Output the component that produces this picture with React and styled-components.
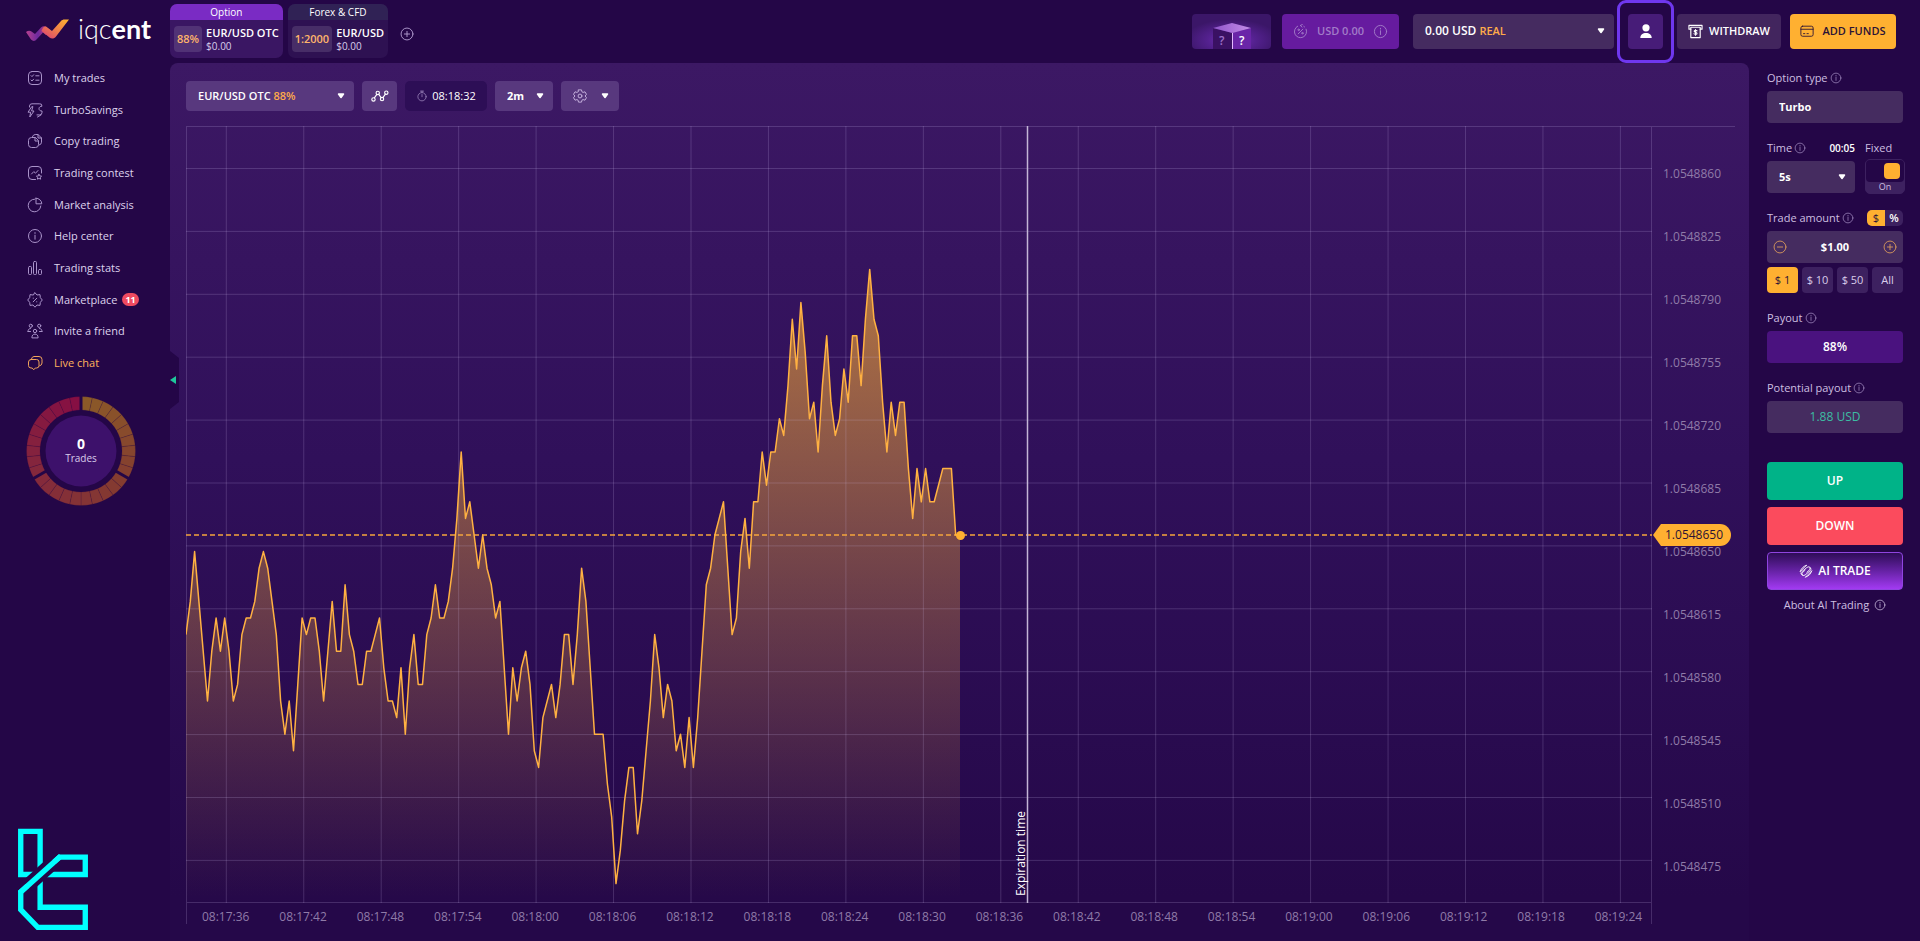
import { useState } from "react";
import styled, { createGlobalStyle, css } from "styled-components";

const GlobalStyle = createGlobalStyle`
  * {
    box-sizing: border-box;
  }

  body {
    margin: 0;
    background: #240647;
    color: #fff;
    font-family: "Open Sans", "Noto Sans", sans-serif;
    font-size: 12px;
    line-height: 16px;
  }

  button, input, select, output {
    font: inherit;
    color: inherit;
  }

  button {
    border: 0;
    padding: 0;
    background: none;
    cursor: pointer;
  }

  svg {
    display: block;
    flex-shrink: 0;
  }
`;

/* ---------- data ---------- */

// price levels of the quote, one entry per tick, counted from the current price
const ticks = [
  -6, -4, -1, -4, -7, -10, -7, -5, -7, -5, -7, -10, -9, -6, -5, -5, -4, -2, -1, -2,
  -4, -6, -10, -12, -10, -13, -9, -5, -6, -5, -5, -7, -10, -7, -4, -7, -7, -3, -6, -7,
  -9, -9, -7, -7, -6, -5, -8, -10, -10, -11, -8, -12, -8, -6, -9, -9, -6, -5, -3, -5,
  -5, -4, -2, 1, 5, 1, 2, 0, -2, 0, -2, -3, -5, -4, -8, -12, -8, -10, -8, -7,
  -9, -13, -14, -11, -10, -9, -11, -9, -6, -6, -9, -6, -2, -4, -8, -12, -12, -12, -15, -17,
  -21, -19, -16, -14, -14, -18, -16, -13, -10, -6, -8, -11, -9, -10, -13, -12, -14, -11, -14, -11,
  -7, -3, -2, 0, 1, 2, -2, -6, -5, -1, 1, -2, 2, 2, 5, 3, 5, 5, 7, 6,
  9, 13, 10, 14, 11, 7, 8, 5, 9, 12, 8, 6, 7, 10, 8, 12, 12, 9, 13, 16,
  13, 12, 8, 5, 8, 6, 8, 8, 4, 1, 4, 2, 4, 2, 2, 3, 4, 4, 4, 0,
];

const prices = [
  "1.0548860", "1.0548825", "1.0548790", "1.0548755", "1.0548720", "1.0548685",
  "1.0548650", "1.0548615", "1.0548580", "1.0548545", "1.0548510", "1.0548475",
];

const times = [
  "08:17:36", "08:17:42", "08:17:48", "08:17:54", "08:18:00", "08:18:06", "08:18:12",
  "08:18:18", "08:18:24", "08:18:30", "08:18:36", "08:18:42", "08:18:48", "08:18:54",
  "08:19:00", "08:19:06", "08:19:12", "08:19:18", "08:19:24",
];

const menu = [
  { label: "My trades", icon: "trades" },
  { label: "TurboSavings", icon: "savings" },
  { label: "Copy trading", icon: "copy" },
  { label: "Trading contest", icon: "contest" },
  { label: "Market analysis", icon: "pie" },
  { label: "Help center", icon: "info" },
  { label: "Trading stats", icon: "stats" },
  { label: "Marketplace", icon: "market", badge: 11 },
  { label: "Invite a friend", icon: "friends" },
  { label: "Live chat", icon: "chat", active: true },
];

/* ---------- icons ---------- */

const paths = {
  trades: (
    <>
      <rect x="1.5" y="1.5" width="13" height="13" rx="3.5" />
      <path d="M4 5.6l1 1 1.6-1.8M4 10l1 1 1.6-1.8M8.8 5.8h3.2M8.8 10.2h3.2" />
    </>
  ),
  savings: (
    <>
      <path d="M2.500 5V4A2.400 2.400 0 0 1 5 1.800h7.200A2.400 2.400 0 0 1 15 4.200c-1.500 0-3 .8-3 2.500 0 1.500 1.200 2.300 3 2.300v1.500a2.400 2.400 0 0 1-2.400 2.400H10" />
      <path d="M4.500 5L1 10.200h2.600L2.800 15l4.200-6H4.600L5.800 5zM10.500 15l3.500-2" />
    </>
  ),
  copy: (
    <>
      <path d="M5.500 3.600A3 3 0 0 1 8.200 1.500H11l3.500 3.500v4.200a3 3 0 0 1-2.400 2.900M11 1.500V5h3.500" />
      <path d="M8 4.500H4.500a3 3 0 0 0-3 3v4a3 3 0 0 0 3 3h4a3 3 0 0 0 3-3V8zM8 4.500V8h3.500" />
    </>
  ),
  contest: (
    <>
      <path d="M8.500 14.500H5A3.500 3.500 0 0 1 1.500 11V5A3.500 3.500 0 0 1 5 1.500h6A3.500 3.500 0 0 1 14.500 5v3" />
      <path d="M4.500 9l2.300-2.400 1.700 1.600 2.500-2.700" />
      <path d="M12 9.300l.8 1.600 1.800.3-1.300 1.200.3 1.800-1.600-.8-1.600.8.3-1.800-1.300-1.200 1.800-.3z" />
    </>
  ),
  pie: (
    <>
      <path d="M7.500 2.200A6.300 6.300 0 1 0 13.800 9" />
      <path d="M9 1.200v5.600h5.800A5.800 5.800 0 0 0 9 1.200z" />
    </>
  ),
  info: (
    <>
      <circle cx="8" cy="8" r="6.500" />
      <path d="M8 7.200v4M8 4.600v.8" />
    </>
  ),
  stats: (
    <>
      <rect x="1.500" y="6.500" width="3" height="8" rx="1" />
      <rect x="6.500" y="1.500" width="3" height="13" rx="1" />
      <rect x="11.500" y="9.500" width="3" height="5" rx="1" />
    </>
  ),
  market: (
    <>
      <path d="M8 .8l2 2.200 3-.4.300 3 2 2.400-2 2.400-.3 3-3-.4-2 2.200-2-2.200-3 .4-.3-3L.7 8l2-2.400.3-3 3 .4z" />
      <path d="M9.800 6.200l-3.600 3.600M6.200 6.200h.2M9.600 9.800h.2" />
    </>
  ),
  friends: (
    <>
      <circle cx="3.800" cy="2.800" r="1.600" />
      <circle cx="12.200" cy="2.800" r="1.600" />
      <circle cx="8" cy="8" r="1.700" />
      <path d="M1 8.500c0-2 1-3 2.500-3M15 8.500c0-2-1-3-2.500-3M4.900 14.500c0-2.300 1.200-3.400 3.100-3.400s3.100 1.100 3.100 3.400zM1 8.500h2.500M15 8.500h-2.500" />
    </>
  ),
  chat: (
    <>
      <path d="M4.500 3.800A2.800 2.800 0 0 1 7 1.500h5A3 3 0 0 1 15 4.500v3.500a3 3 0 0 1-2.400 2.900" />
      <path d="M4 4.500h5.500A2.500 2.500 0 0 1 12 7v3.500A2.500 2.500 0 0 1 9.500 13H8.300l-1.600 1.800L5.200 13H4a2.500 2.500 0 0 1-2.500-2.500V7A2.500 2.500 0 0 1 4 4.500z" />
    </>
  ),
  plus: (
    <>
      <circle cx="8" cy="8" r="6.800" />
      <path d="M8 5v6M5 8h6" />
    </>
  ),
  minus: (
    <>
      <circle cx="8" cy="8" r="6.800" />
      <path d="M5 8h6" />
    </>
  ),
  discount: (
    <>
      <path d="M5 2.300A6.500 6.500 0 1 0 14 5.500M8 1.500l2-1M8 1.500l1.500 1.800M11.500 2.500l.8.600" />
      <path d="M10.500 5.500l-5 5" />
      <circle cx="6" cy="6.200" r=".8" />
      <circle cx="10" cy="9.800" r=".8" />
    </>
  ),
  line: (
    <>
      <circle cx="2.200" cy="11" r="1.500" />
      <circle cx="6" cy="5.300" r="1.500" />
      <circle cx="9.800" cy="10.700" r="1.500" />
      <circle cx="13.600" cy="5" r="1.500" />
      <path d="M3 9.700l2.200-3.100M6.900 6.500l2.100 3M10.600 9.400l2.200-3.100" />
    </>
  ),
  clock: (
    <>
      <circle cx="8" cy="9" r="5.500" />
      <path d="M8 6v3M6 1.500h4M8 1.500v2" />
    </>
  ),
  gear: (
    <>
      <path d="M6.300 1h3.400l.5 2.200 1.300.7 2.200-.7 1.700 2.900L13.800 8l1.600 1.900-1.700 2.900-2.200-.7-1.300.7-.5 2.200H6.300l-.5-2.200-1.300-.7-2.200.7L.6 9.900 2.200 8 .6 6.100l1.700-2.900 2.200.7 1.300-.7z" />
      <circle cx="8" cy="8" r="2.200" />
    </>
  ),
  withdraw: (
    <>
      <path d="M3 5.500H1V1.500h14v4h-2" />
      <path d="M3 3.500h10V14.500H3zM9.600 7.300c-.5-.7-3-.8-3 .5s3 .8 3 2.200-2.600 1.200-3.200.4M8 6v6" />
    </>
  ),
  card: (
    <>
      <rect x="1" y="2.500" width="14" height="11.500" rx="2" />
      <path d="M1 6h14M4 11h1.500M8 11h1.500" />
    </>
  ),
  ai: (
    <>
      <path d="M1.500 8.500C2.500 5 5 2.500 8.500 1.500M1.500 8.500l7-7" />
      <path d="M4 12C1.500 12 2 9.800 3.500 8.500L9 4c3-2 5 .3 3.500 2.200L9 9.500" />
      <path d="M12 4.500c2.500 0 2 2.200.5 3.500L7 12.500c-3 2-5-.3-3.500-2.200L7 7" />
      <path d="M14.500 8c-1 3.500-3.500 6-7 7M14.500 8l-7 7" />
    </>
  ),
};

const Icon = ({ name, size = 16, width = 1 }) => (
  <svg width={size} height={size} viewBox="0 0 16 16" fill="none" stroke="currentColor"
    strokeWidth={width} strokeLinecap="round" strokeLinejoin="round" aria-hidden="true">
    {paths[name]}
  </svg>
);

const Caret = () => (
  <svg width="8" height="6" viewBox="0 0 8 6" aria-hidden="true">
    <path d="M1.500 1h5L4 4.500z" fill="#fff" stroke="#fff" strokeWidth="1.500" strokeLinejoin="round" />
  </svg>
);

const Logo = () => (
  <LogoLink href="#" aria-label="iqcent">
    <svg width="44" height="24" viewBox="0 0 44 24">
      <defs>
        <linearGradient id="mark-left" x1="0" x2="1">
          <stop offset="0" stopColor="#b9408f" />
          <stop offset=".5" stopColor="#6d2aa0" />
          <stop offset="1" stopColor="#e0436e" />
        </linearGradient>
        <linearGradient id="mark-right" x1="0" x2="1" y1="1" y2="0">
          <stop offset="0" stopColor="#d83a78" />
          <stop offset=".5" stopColor="#f07f4a" />
          <stop offset="1" stopColor="#ffb52e" />
        </linearGradient>
      </defs>
      <path d="M1 13c2-1.500 4-1.500 5.500-.5L10 15l6-6.500c1.500-1.500 3.500-1.700 5-.7L25 11l-4 5-3-2.500-6 6.500c-2 2.500-4 2.500-6 .5z" fill="url(#mark-left)" />
      <path d="M21 7.500l6 4.500L36 2c1-1 2-1.500 3.500-1.500H44L31 17.500c-2 2.500-4.500 2.500-6.500 1L16.500 12c1-3 2.500-5 4.500-4.500z" fill="url(#mark-right)" />
    </svg>
    <LogoText>iqc<b>ent</b></LogoText>
  </LogoLink>
);

const Watermark = () => (
  <svg width="71" height="103" viewBox="56 56 212 308" fill="none" stroke="#00ffff" strokeWidth="16" aria-hidden="true">
    <path d="M110 195H64V66H122V180" />
    <path d="M140 195H257V143H180L64 247V300L115 353H257V293H122V205" />
    <path d="M164 157L84 229" stroke="#240647" strokeWidth="42" />
    <path d="M184 140L60 251" />
  </svg>
);

const Cube = () => (
  <svg width="79" height="35" viewBox="0 0 79 35" aria-hidden="true">
    <defs>
      <radialGradient id="glow" cx=".5" cy=".75" r=".6">
        <stop offset="0" stopColor="#7a33bd" />
        <stop offset=".5" stopColor="#54218f" />
        <stop offset="1" stopColor="#3b1668" />
      </radialGradient>
      <linearGradient id="cube-top" x1="0" x2="1">
        <stop offset="0" stopColor="#8f55c9" />
        <stop offset="1" stopColor="#c48de8" />
      </linearGradient>
    </defs>
    <rect width="79" height="35" fill="url(#glow)" />
    <path d="M21 14l19.500 5v16H21z" fill="#3a1163" />
    <path d="M40.500 19L59 14v21H40.500z" fill="#6a25a8" />
    <path d="M21 14L40 9l19 5-18.500 5z" fill="url(#cube-top)" />
    <path d="M40.500 19v16" stroke="#e3b9ff" />
    <text x="27" y="31" fontSize="12" fill="#9d70c9">?</text>
    <text x="47" y="31" fontSize="12" fontWeight="600" fill="#fff">?</text>
  </svg>
);

/* ---------- trades ring ---------- */

const mix = (from, to, t) => {
  const part = from.map((c, i) => Math.round(c + (to[i] - c) * t));
  return `rgb(${part.join(",")})`;
};

const ringStops = [[139, 90, 40], [132, 60, 48], [132, 40, 60], [134, 12, 68]];

const Ring = () => {
  const point = (deg, r) => {
    const a = ((deg - 90) * Math.PI) / 180;
    return `${55 + r * Math.cos(a)} ${55 + r * Math.sin(a)}`;
  };

  return (
    <svg width="110" height="110" viewBox="0 0 110 110" aria-hidden="true">
      {Array.from({ length: 30 }, (_, i) => {
        const part = Math.floor(i / 10);
        const from = i * 12;
        const to = from + 12;
        return (
          <path key={i}
            d={`M${point(from, 54.5)}A54.500 54.500 0 0 1 ${point(to, 54.5)}L${point(to, 41)}A41 41 0 0 0 ${point(from, 41)}z`}
            fill={mix(ringStops[part], ringStops[part + 1], (i % 10) / 10)}
            stroke="#240647" strokeOpacity=".25" strokeWidth=".7" />
        );
      })}
      {[0, 120, 240].map((deg) => (
        <path key={deg} d={`M${point(deg, 40)}L${point(deg, 56)}`} stroke="#240647" strokeWidth="3" />
      ))}
      <circle cx="55" cy="55" r="35.500" fill="#3d116b" />
    </svg>
  );
};

/* ---------- chart ---------- */

const PLOT = { width: 1466, height: 777, price: 409, level: 16.6, tick: 4.3, end: 774 };

const Chart = () => {
  const line = [
    ...ticks.map((level, i) => [i * PLOT.tick, PLOT.price - level * PLOT.level]),
    [PLOT.end, PLOT.price],
  ];
  const points = line.map(([x, y]) => `${x.toFixed(1)},${y.toFixed(1)}`).join(" ");
  const top = `${(PLOT.price / PLOT.height) * 100}%`;

  return (
    <ChartGrid>
      <Plot>
        <svg viewBox={`0 0 ${PLOT.width} ${PLOT.height}`} preserveAspectRatio="none">
          <defs>
            <linearGradient id="area" x1="0" x2="0" y1="0" y2="1">
              <stop offset="0" stopColor="#ffb031" stopOpacity=".62" />
              <stop offset="1" stopColor="#ffb031" stopOpacity="0" />
            </linearGradient>
          </defs>
          <polygon points={`0,${PLOT.height} ${points} ${PLOT.end},${PLOT.height}`} fill="url(#area)" />
          <g stroke="#e0ccff" strokeOpacity=".18">
            {times.map((time, i) => (
              <line key={time} x1={40.3 + i * 77.45} x2={40.3 + i * 77.45} y1="0" y2={PLOT.height} />
            ))}
            {prices.map((price, i) => (
              <line key={price} x1="0" x2={PLOT.width} y1={42.5 + i * 62.9} y2={42.5 + i * 62.9} />
            ))}
          </g>
          <line x1="0" x2={PLOT.width} y1={PLOT.price} y2={PLOT.price} stroke="#f5a53c" strokeWidth="1.500" strokeDasharray="5 3" />
          <polyline points={points} fill="none" stroke="#ffb142" strokeWidth="1.500" strokeLinejoin="round" />
          <line x1="841.500" x2="841.500" y1="0" y2={PLOT.height} stroke="#c4b5d6" strokeWidth="1.500" />
        </svg>
        <Dot style={{ top, left: `${(PLOT.end / PLOT.width) * 100}%` }} />
        <Expiration style={{ right: `${100 - (843 / PLOT.width) * 100}%` }}>Expiration time</Expiration>
      </Plot>
      <PriceAxis>
        {prices.map((price) => <span key={price}>{price}</span>)}
        <PriceTag style={{ top }}>1.0548650</PriceTag>
      </PriceAxis>
      <TimeAxis>
        {times.map((time) => <span key={time}>{time}</span>)}
      </TimeAxis>
    </ChartGrid>
  );
};

/* ---------- page parts ---------- */

const Header = () => (
  <HeaderBar>
    <Logo />
    <Tab $active>
      <TabTitle $active>Option</TabTitle>
      <TabBody>
        <Rate>88%</Rate>
        <div>
          <TabPair>EUR/USD OTC</TabPair>
          <TabSum>$0.00</TabSum>
        </div>
      </TabBody>
    </Tab>
    <Tab>
      <TabTitle>Forex &amp; CFD</TabTitle>
      <TabBody>
        <Rate>1:2000</Rate>
        <div>
          <TabPair>EUR/USD</TabPair>
          <TabSum>$0.00</TabSum>
        </div>
      </TabBody>
    </Tab>
    <AddTab aria-label="Add asset"><Icon name="plus" size={14} /></AddTab>

    <Actions>
      <Promo aria-label="Mystery box"><Cube /></Promo>
      <Bonus>
        <Icon name="discount" size={15} />
        USD 0.00
        <Icon name="info" size={15} />
      </Bonus>
      <Balance aria-haspopup="listbox">
        <span>0.00 USD <Accent>REAL</Accent></span>
        <Caret />
      </Balance>
      <Profile aria-label="Profile">
        <svg width="12" height="15" viewBox="0 0 12 15" fill="#fff">
          <circle cx="6" cy="3.800" r="3.600" />
          <path d="M.3 14C.3 10.800 2.800 9 6 9s5.700 1.800 5.700 5z" />
        </svg>
      </Profile>
      <Withdraw><Icon name="withdraw" size={15} width={1.2} />WITHDRAW</Withdraw>
      <AddFunds><Icon name="card" size={14} />ADD FUNDS</AddFunds>
    </Actions>
  </HeaderBar>
);

const Sidebar = () => (
  <Side>
    <Menu>
      {menu.map(({ label, icon, badge, active }) => (
        <MenuLink key={label} href="#" $active={active}>
          <Icon name={icon} />
          {label}
          {badge && <Badge>{badge}</Badge>}
        </MenuLink>
      ))}
    </Menu>
    <Trades>
      <Ring />
      <TradesText>
        <strong>0</strong>
        <span>Trades</span>
      </TradesText>
    </Trades>
    <Mark><Watermark /></Mark>
  </Side>
);

const Workspace = () => (
  <Panel>
    <Collapse aria-label="Collapse menu">
      <svg width="6" height="8" viewBox="0 0 6 8"><path d="M6 0v8L0 4z" fill="#1fc79b" /></svg>
    </Collapse>
    <Toolbar>
      <PairButton aria-haspopup="listbox">
        <span>EUR/USD OTC <Accent>88%</Accent></span>
        <Caret />
      </PairButton>
      <ToolButton aria-label="Chart type"><Icon name="line" size={18} /></ToolButton>
      <Clock><Icon name="clock" size={12} /><time>08:18:32</time></Clock>
      <SelectBox $tool>
        <select aria-label="Time frame" defaultValue="2m">
          <option>2m</option>
          <option>5m</option>
        </select>
        <Caret />
      </SelectBox>
      <SettingsButton aria-label="Chart settings" aria-haspopup="menu">
        <Icon name="gear" size={14} />
        <Caret />
      </SettingsButton>
    </Toolbar>
    <Chart />
  </Panel>
);

const Order = () => {
  const [amount, setAmount] = useState(1);
  const [unit, setUnit] = useState("$");
  const [fixed, setFixed] = useState(true);

  return (
    <OrderForm onSubmit={(e) => e.preventDefault()}>
      <Group>
        <Caption><label htmlFor="type">Option type</label><Icon name="info" size={12} /></Caption>
        <SelectBox>
          <select id="type" defaultValue="Turbo"><option>Turbo</option></select>
        </SelectBox>
      </Group>

      <TimeRow>
        <Group>
          <Caption>
            <label htmlFor="time">Time</label><Icon name="info" size={12} />
            <Left>00:05</Left>
          </Caption>
          <SelectBox>
            <select id="time" defaultValue="5s"><option>5s</option></select>
            <Caret />
          </SelectBox>
        </Group>
        <Group>
          <Caption><label htmlFor="fixed">Fixed</label></Caption>
          <Switch>
            <input id="fixed" type="checkbox" checked={fixed} onChange={() => setFixed(!fixed)} />
            <i />
            <span>{fixed ? "On" : "Off"}</span>
          </Switch>
        </Group>
      </TimeRow>

      <Group>
        <Caption>
          <label htmlFor="amount">Trade amount</label><Icon name="info" size={12} />
          <Units>
            {["$", "%"].map((u) => (
              <label key={u}>
                <input type="radio" name="unit" checked={unit === u} onChange={() => setUnit(u)} />
                <span>{u}</span>
              </label>
            ))}
          </Units>
        </Caption>
        <Stepper>
          <button type="button" aria-label="Less" onClick={() => setAmount(Math.max(1, amount - 1))}>
            <Icon name="minus" size={14} />
          </button>
          <input id="amount" value={`$${amount.toFixed(2)}`} readOnly />
          <button type="button" aria-label="More" onClick={() => setAmount(amount + 1)}>
            <Icon name="plus" size={14} />
          </button>
        </Stepper>
        <Quick>
          {[1, 10, 50].map((sum) => (
            <QuickButton key={sum} type="button" $active={amount === sum} onClick={() => setAmount(sum)}>
              $ {sum}
            </QuickButton>
          ))}
          <QuickButton type="button">All</QuickButton>
        </Quick>
      </Group>

      <Group>
        <Caption><label htmlFor="payout">Payout</label><Icon name="info" size={12} /></Caption>
        <Result id="payout" $strong>88%</Result>
      </Group>
      <Group>
        <Caption><label htmlFor="potential">Potential payout</label><Icon name="info" size={12} /></Caption>
        <Result id="potential">{(amount * 1.88).toFixed(2)} USD</Result>
      </Group>

      <Deals>
        <DealButton $kind="up">UP</DealButton>
        <DealButton $kind="down">DOWN</DealButton>
        <DealButton $kind="ai"><Icon name="ai" size={14} />AI TRADE</DealButton>
        <About href="#">About AI Trading <Icon name="info" size={12} /></About>
      </Deals>
    </OrderForm>
  );
};

const App = () => (
  <>
    <GlobalStyle />
    <Page>
      <Header />
      <Sidebar />
      <Workspace />
      <Order />
    </Page>
  </>
);

/* ---------- styles ---------- */

const Page = styled.div`
  display: grid;
  grid-template-columns: 170px minmax(0, 1fr) 171px;
  grid-template-rows: 63px 1fr;
  min-height: 100vh;
`;

const HeaderBar = styled.header`
  grid-column: 1 / -1;
  display: flex;
  align-items: flex-start;
  padding-right: 24px;
`;

const LogoLink = styled.a`
  display: flex;
  gap: 9px;
  width: 170px;
  padding: 19px 0 0 25px;
  color: #fff;
  text-decoration: none;
`;

const LogoText = styled.span`
  font: 300 27px/20px Lato, sans-serif;

  b {
    font-weight: 700;
  }
`;

const Tab = styled.section`
  flex-shrink: 0;
  margin: 4px 5px 0 0;
  border-radius: 7px;
  overflow: hidden;
  background: ${({ $active }) => ($active ? "#3a1663" : "#2e1152")};
`;

const TabTitle = styled.h2`
  margin: 0;
  font-size: 10px;
  font-weight: 500;
  line-height: 16px;
  text-align: center;
  background: ${({ $active }) => ($active ? "#7a2bc4" : "#302255")};
`;

const TabBody = styled.div`
  display: flex;
  align-items: center;
  gap: 4px;
  height: 38px;
  padding: 0 4px;
`;

const Rate = styled.span`
  padding: 5px 3px;
  border-radius: 4px;
  background: rgba(255, 255, 255, 0.12);
  color: #ffb56b;
  font-size: 11px;
  font-weight: 600;
`;

const TabPair = styled.div`
  font-size: 11px;
  font-weight: 600;
  line-height: 14px;
`;

const TabSum = styled.div`
  font-size: 10px;
  line-height: 12px;
  color: #d9cdea;
`;

const AddTab = styled.button`
  margin: 27px 0 0 7px;
  color: #b8a3d6;
`;

const Actions = styled.div`
  display: flex;
  gap: 14px;
  margin: 14px 0 0 auto;
`;

const HeaderButton = styled.button`
  display: flex;
  align-items: center;
  justify-content: center;
  height: 35px;
  padding-bottom: 1px;
  border-radius: 4px;
  font-size: 12px;
  font-weight: 600;
`;

const Promo = styled(HeaderButton)`
  overflow: hidden;
  margin-right: -3px;
  padding: 0;
`;

const Bonus = styled(HeaderButton)`
  gap: 9px;
  width: 117px;
  background: #661b9f;
  color: #a27cc8;
  font-size: 11px;
`;

const Balance = styled(HeaderButton)`
  justify-content: space-between;
  width: 201px;
  padding: 0 9px 1px 12px;
  background: #452b60;
`;

const Accent = styled.span`
  color: #ffab4a;
  font-size: 11px;
  font-weight: 600;
`;

const Profile = styled(HeaderButton)`
  position: relative;
  width: 35px;
  background: #471c78;

  &::after {
    content: "";
    position: absolute;
    inset: -14px -11px;
    border: 3px solid #6f37ee;
    border-radius: 9px;
  }
`;

const Withdraw = styled(HeaderButton)`
  gap: 6px;
  width: 104px;
  background: #42255e;
  font-size: 11px;
`;

const AddFunds = styled(HeaderButton)`
  gap: 8px;
  width: 106px;
  margin-left: -5px;
  background: #ffb031;
  color: #2b1236;
  font-size: 11px;
`;

const Side = styled.aside`
  display: flex;
  flex-direction: column;
`;

const Menu = styled.nav`
  display: flex;
  flex-direction: column;
  height: 317px;
  margin-top: -1px;
  padding-left: 27px;
`;

const MenuLink = styled.a`
  flex: 1;
  display: flex;
  align-items: center;
  gap: 11px;
  color: ${({ $active }) => ($active ? "#ffb35c" : "#ddd2ec")};
  font-size: 11px;
  font-weight: 500;
  text-decoration: none;

  svg {
    color: ${({ $active }) => ($active ? "#f0a35c" : "#a992c9")};
  }
`;

const Badge = styled.span`
  margin-left: -6px;
  padding: 0 3px;
  border-radius: 7px;
  background: #ef4a60;
  color: #fff;
  font-size: 9px;
  font-weight: 700;
  line-height: 13px;
`;

const Trades = styled.div`
  display: grid;
  place-items: center;
  width: 110px;
  margin: 17px 0 0 26px;

  > * {
    grid-area: 1 / 1;
  }
`;

const TradesText = styled.div`
  display: flex;
  flex-direction: column;
  align-items: center;
  color: #d9cdea;
  font-size: 10px;
  line-height: 14px;

  strong {
    color: #fff;
    font-size: 14px;
    line-height: 14px;
  }
`;

const Mark = styled.div`
  margin-top: auto;
  padding: 0 0 10px 18px;
`;

const Panel = styled.main`
  position: relative;
  display: flex;
  flex-direction: column;
  padding: 18px 14px 17px 16px;
  border-radius: 8px 8px 0 0;
  background: linear-gradient(#3c1864, #30105a 45%, #250849 95%);
`;

const Collapse = styled.button`
  position: absolute;
  top: 288px;
  left: 0;
  display: flex;
  align-items: center;
  width: 9px;
  height: 58px;
  background: #240647;
  clip-path: polygon(0 0, 100% 12%, 100% 88%, 0 100%);
`;

const Toolbar = styled.div`
  display: flex;
  gap: 8px;
  height: 30px;
  margin-bottom: 15px;
`;

const ToolButton = styled.button`
  display: flex;
  align-items: center;
  justify-content: center;
  width: 35px;
  border-radius: 4px;
  background: #58387e;
`;

const PairButton = styled(ToolButton)`
  justify-content: space-between;
  width: 168px;
  padding: 0 9px 0 12px;
  font-size: 11px;
  font-weight: 600;
`;

const SettingsButton = styled(ToolButton)`
  gap: 14px;
  width: 58px;
  padding-left: 2px;
  color: #d0bde6;
`;

const Clock = styled.div`
  display: flex;
  align-items: center;
  justify-content: center;
  gap: 4px;
  width: 82px;
  border-radius: 5px;
  background: #2d0e56;
  font-size: 11px;
  font-weight: 500;

  svg {
    color: #a08abf;
  }
`;

const SelectBox = styled.div`
  position: relative;
  height: ${({ $tool }) => ($tool ? 30 : 32)}px;
  border-radius: 4px;
  background: ${({ $tool }) => ($tool ? "#58387e" : "#452c60")};

  select {
    width: ${({ $tool }) => ($tool ? "58px" : "100%")};
    height: 100%;
    padding: 0 12px;
    border: 0;
    background: none;
    appearance: none;
    font-weight: 700;
    font-size: 11px;
  }

  option {
    background: #452c60;
  }

  svg {
    position: absolute;
    top: calc(50% - 3px);
    right: 9px;
    pointer-events: none;
  }
`;

const ChartGrid = styled.div`
  flex: 1;
  display: grid;
  grid-template-columns: minmax(0, 1fr) 83px;
  grid-template-rows: minmax(400px, 1fr) 21px;
`;

const gridColor = "rgba(224, 204, 255, 0.18)";

const Plot = styled.div`
  position: relative;
  box-shadow: inset 0 0 0 1px ${gridColor};

  > svg {
    position: absolute;
    width: 100%;
    height: 100%;
  }
`;

const Dot = styled.i`
  position: absolute;
  width: 9px;
  height: 9px;
  margin: -4px;
  border-radius: 50%;
  background: #ffb031;
`;

const Expiration = styled.span`
  position: absolute;
  bottom: 7px;
  writing-mode: vertical-rl;
  transform: rotate(180deg);
`;

const PriceAxis = styled.div`
  position: relative;
  display: flex;
  flex-direction: column;
  padding: 17px 0 5px 11px;
  box-shadow: inset 0 1px ${gridColor};
  color: #8f7ba8;

  > span {
    flex: 1;
    display: flex;
    align-items: center;
  }
`;

const PriceTag = styled.strong`
  position: absolute;
  left: 1px;
  padding: 0 8px 0 12px;
  border-radius: 0 11px 11px 0;
  background: #ffb031;
  clip-path: polygon(0 50%, 8px 0, 100% 0, 100% 100%, 8px 100%);
  color: #2b1236;
  font-weight: 400;
  line-height: 22px;
  transform: translateY(-50%);
`;

const TimeAxis = styled.div`
  display: flex;
  padding-top: 6px;
  border: 1px solid ${gridColor};
  border-width: 0 1px;
  color: #8f7ba8;

  span {
    flex: 0 0 calc(100% / 18.92);
    text-align: center;
  }
`;

const OrderForm = styled.form`
  display: flex;
  flex-direction: column;
  gap: 17px;
  padding: 7px 17px 0 18px;
`;

const Group = styled.div`
  min-width: 0;
`;

const Caption = styled.div`
  display: flex;
  align-items: center;
  gap: 2px;
  height: 16px;
  margin-bottom: 5px;
  color: #cdbfe0;
  font-size: 11px;
  white-space: nowrap;

  > svg {
    color: #a08abf;
  }
`;

const Left = styled.b`
  margin-left: auto;
  color: #fff;
  font-size: 10px;
  font-weight: 600;
`;

const TimeRow = styled.div`
  display: grid;
  grid-template-columns: 88px 40px;
  gap: 10px;
`;

const Switch = styled.label`
  display: flex;
  flex-direction: column;
  height: 35px;
  margin: -2px 0 -1px;
  border: 1px solid #3d2160;
  border-radius: 5px;
  background: #3d2160;
  cursor: pointer;

  input {
    position: absolute;
    opacity: 0;
  }

  i {
    display: flex;
    height: 22px;
    padding: 3px 4px;
    border-radius: 4px;
    background: #240647;
  }

  i::after {
    content: "";
    width: 16px;
    border-radius: 4px;
    background: #ffb031;
  }

  input:checked + i {
    justify-content: flex-end;
  }

  span {
    color: #cdbfe0;
    font-size: 9px;
    line-height: 10px;
    text-align: center;
  }
`;

const Units = styled.div`
  display: flex;
  margin-left: auto;
  border-radius: 5px;
  overflow: hidden;
  background: #3d2160;
  color: #fff;
  font-weight: 600;

  input {
    position: absolute;
    opacity: 0;
  }

  span {
    display: block;
    width: 18px;
    text-align: center;
  }

  input:checked + span {
    background: #ffb031;
    color: #2b1236;
    font-weight: 400;
  }
`;

const Stepper = styled.div`
  display: flex;
  align-items: center;
  justify-content: space-between;
  height: 32px;
  padding: 0 6px;
  border-radius: 4px;
  background: #452c60;

  button {
    color: #dc9a5c;
  }

  input {
    width: 80px;
    padding: 0;
    border: 0;
    background: none;
    font-size: 11px;
    font-weight: 700;
    text-align: center;
  }
`;

const Quick = styled.div`
  display: grid;
  grid-template-columns: repeat(4, 1fr);
  gap: 4px;
  margin-top: 4px;
`;

const QuickButton = styled.button`
  height: 26px;
  border-radius: 4px;
  background: ${({ $active }) => ($active ? "#ffb031" : "#3d2160")};
  color: ${({ $active }) => ($active ? "#2b1236" : "#d9cdea")};
  font-size: 11px;
  font-weight: 500;
`;

const Result = styled.output`
  display: block;
  border-radius: 4px;
  background: ${({ $strong }) => ($strong ? "#4a127f" : "#452c60")};
  color: ${({ $strong }) => ($strong ? "#fff" : "#3dbca3")};
  font-weight: ${({ $strong }) => ($strong ? 600 : 400)};
  line-height: 32px;
  text-align: center;
`;

const Deals = styled.div`
  display: flex;
  flex-direction: column;
  gap: 7px;
  margin-top: 12px;
`;

const dealStyles = {
  up: css`
    background: #00b388;
  `,
  down: css`
    background: #fb4b5d;
  `,
  ai: css`
    border: 1px solid #8f44e0;
    background: linear-gradient(#2e0d57, #6622a5 50%, #a23af2);
  `,
};

const DealButton = styled.button`
  display: flex;
  align-items: center;
  justify-content: center;
  gap: 5px;
  height: 38px;
  border-radius: 4px;
  font-weight: 600;
  ${({ $kind }) => dealStyles[$kind]}
`;

const About = styled.a`
  display: flex;
  align-items: center;
  justify-content: center;
  gap: 5px;
  color: #cdbfe0;
  font-size: 11px;
  text-decoration: none;
`;

export default App;
